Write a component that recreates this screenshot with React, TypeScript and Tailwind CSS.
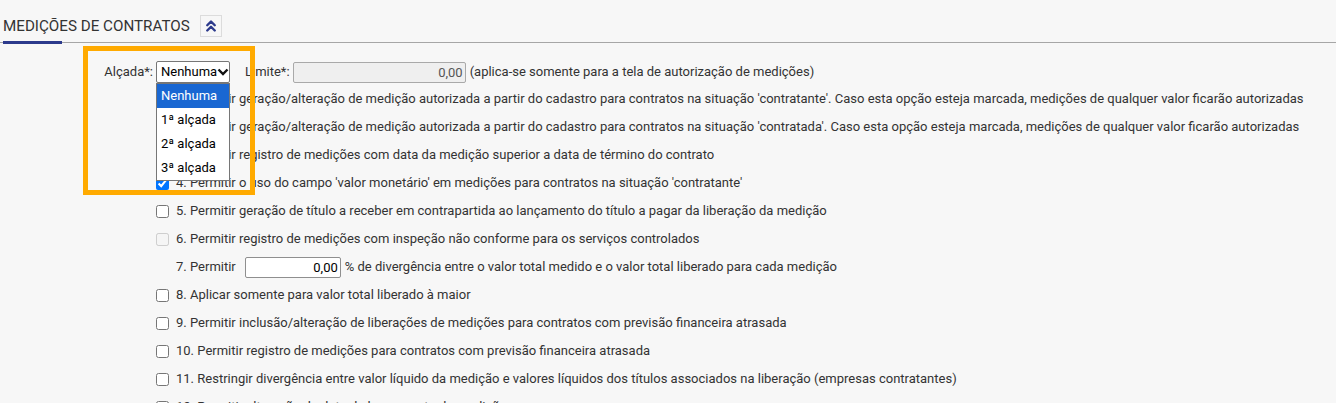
import { ChevronsUp, ChevronDown } from "lucide-react";

const rows = [
  { n: 1, text: "1. Permitir geração/alteração de medição autorizada a partir do cadastro para contratos na situação 'contratante'. Caso esta opção esteja marcada, medições de qualquer valor ficarão autorizadas" },
  { n: 2, text: "2. Permitir geração/alteração de medição autorizada a partir do cadastro para contratos na situação 'contratada'. Caso esta opção esteja marcada, medições de qualquer valor ficarão autorizadas" },
  { n: 3, text: "3. Permitir registro de medições com data da medição superior a data de término do contrato" },
  { n: 4, text: "4. Permitir o uso do campo 'valor monetário' em medições para contratos na situação 'contratante'", checked: true },
  { n: 5, text: "5. Permitir geração de título a receber em contrapartida ao lançamento do título a pagar da liberação da medição" },
  { n: 6, text: "6. Permitir registro de medições com inspeção não conforme para os serviços controlados", disabled: true },
  { n: 7, text: "" },
  { n: 8, text: "8. Aplicar somente para valor total liberado à maior" },
  { n: 9, text: "9. Permitir inclusão/alteração de liberações de medições para contratos com previsão financeira atrasada" },
  { n: 10, text: "10. Permitir registro de medições para contratos com previsão financeira atrasada" },
  { n: 11, text: "11. Restringir divergência entre valor líquido da medição e valores líquidos dos títulos associados na liberação (empresas contratantes)" },
  { n: 12, text: "12. Permitir alteração da data de lançamento da medição" },
];

const options = ["Nenhuma", "1ª alçada", "2ª alçada", "3ª alçada"];

export default function App() {
  return (
    <div className="relative w-[1336px] h-[403px] overflow-hidden bg-[#f7f7f7] text-[13px] text-[#333] font-['Roboto',sans-serif]">
      {/* Header */}
      <div className="flex items-center h-[42px] pl-[3px] pt-[10px]">
        <span className="text-[15.2px] text-[#333]">MEDIÇÕES DE CONTRATOS</span>
        <span className="ml-[10px] w-[22px] h-[22px] flex items-center justify-center border border-[#dcdcdc] bg-[#f7f7f7]">
          <ChevronsUp size={18} strokeWidth={3.2} className="text-[#2c3a8c]" />
        </span>
      </div>
      <div className="relative h-px bg-[#a6a6a6]">
        <div className="absolute left-[3px] -top-px h-[3px] w-[59px] bg-[#2c3a8c]" />
      </div>

      {/* Alçada / Limite */}
      <div className="flex items-center h-[22px] mt-[18px] pl-[93px]">
        <span className="w-[60px] text-right">Alçada*:</span>
        <div className="ml-[3px] h-[22px] w-[74px] flex items-center justify-between border border-[#767676] rounded-[2px] bg-white text-black pl-[4px] pr-[2px]">
          <span>Nenhuma</span>
          <svg width="12" height="8" viewBox="0 0 12 8" className="shrink-0">
            <path d="M1.5 1.5 L6 6 L10.5 1.5" fill="none" stroke="#111" strokeWidth="2.4" />
          </svg>
        </div>
        <span className="ml-[15px]">Limite*:</span>
        <input
          disabled
          value="0,00"
          readOnly
          className="ml-[3px] h-[21px] w-[173px] border border-[#a9a9a9] rounded-[2px] bg-[#efefef] text-right pr-[2px] text-[#555] text-[13px]"
        />
        <span className="ml-[4px]">(aplica-se somente para a tela de autorização de medições)</span>
      </div>

      {/* Options */}
      <div className="flex flex-col pl-[156px] mt-[2px]">
        {rows.map((r) =>
          r.n === 7 ? (
            <div key={r.n} className="flex items-center h-[28px] pl-[20px]">
              <span>7. Permitir</span>
              <input
                value="0,00"
                readOnly
                className="ml-[9px] h-[21px] w-[96px] border border-[#8f8f8f] rounded-[2px] bg-white text-right pr-[2px] text-black text-[13px]"
              />
              <span className="ml-[4px]">% de divergência entre o valor total medido e o valor total liberado para cada medição</span>
            </div>
          ) : (
            <div key={r.n} className="flex items-center h-[28px] whitespace-nowrap">
              <input
                type="checkbox"
                defaultChecked={r.checked}
                disabled={r.disabled}
                className="m-0 w-[13px] h-[13px] shrink-0 accent-[#0075ff]"
              />
              <span className="ml-[7px]">{r.text}</span>
            </div>
          )
        )}
      </div>

      {/* Open dropdown list */}
      <div className="absolute left-[156px] top-[83px] w-[74px] flex flex-col bg-white border border-[#767676] text-black text-[13px]">
        {options.map((o, i) => (
          <div
            key={o}
            className={`flex items-center h-[24px] pl-[4px] ${i === 0 ? "bg-[#1967d2] text-white" : ""}`}
          >
            {o}
          </div>
        ))}
      </div>

      {/* Highlight frame */}
      <div className="absolute left-[83px] top-[46px] w-[172px] h-[149px] border-[5px] border-[#ffaa00]" />
    </div>
  );
}
